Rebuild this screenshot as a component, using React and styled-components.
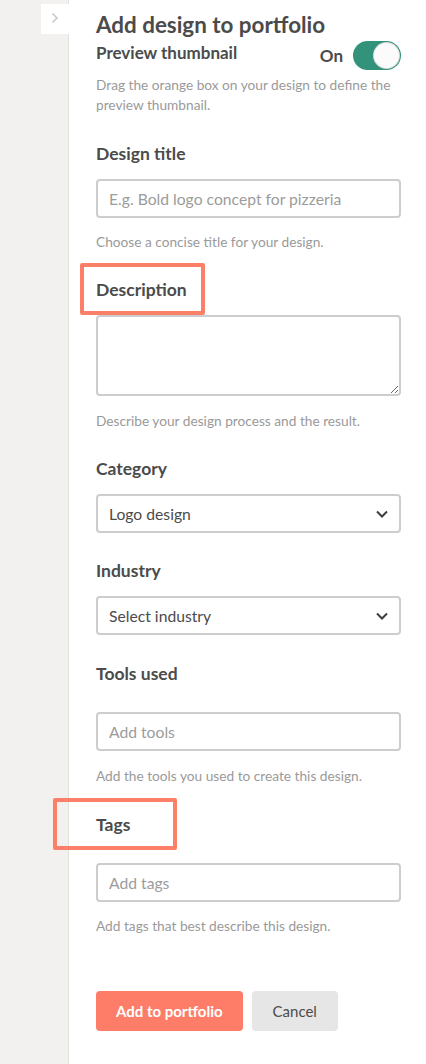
import React, { useState } from 'react';
import styled, { createGlobalStyle } from 'styled-components';

const GlobalStyle = createGlobalStyle`
  html, body {
    margin: 0;
    padding: 0;
    background: #ffffff;
  }
  body {
    font-family: Lato, 'Liberation Sans', Arial, sans-serif;
    color: #4b4b4b;
  }
`;

const Page = styled.div`
  display: flex;
  min-height: 1064px;
`;

const Rail = styled.aside`
  width: 69px;
  flex-shrink: 0;
  background: #f2f1ef;
  border-right: 1px solid #e3e2df;
  padding-top: 4px;
  box-sizing: border-box;
`;

const RailTab = styled.button`
  display: flex;
  align-items: center;
  justify-content: center;
  margin-left: 41px;
  width: 28px;
  height: 30px;
  padding: 0 0 2px 0;
  border: none;
  background: #ffffff;
  cursor: pointer;
`;

const Panel = styled.main`
  flex: 1;
  padding: 12px 25px 40px 27px;
  box-sizing: border-box;
`;

const Title = styled.h1`
  margin: 0;
  font-size: 22.4px;
  line-height: 26px;
  font-weight: 700;
  color: #4b4b4b;
`;

const ToggleRow = styled.div`
  display: flex;
  align-items: center;
  justify-content: space-between;
  margin-top: 3px;
`;

const SubHeading = styled.span`
  font-size: 17px;
  font-weight: 700;
  line-height: 22px;
  margin-top: -6px;
`;

const ToggleWrap = styled.label`
  display: flex;
  align-items: center;
  gap: 10px;
  font-size: 17px;
  font-weight: 700;
  cursor: pointer;
`;

const Track = styled.span`
  position: relative;
  display: inline-block;
  width: 48px;
  height: 29px;
  border-radius: 15px;
  background: ${(p) => (p.$on ? '#33937a' : '#cfcfcf')};
  transition: background 0.2s;
`;

const Knob = styled.span`
  position: absolute;
  top: 2px;
  left: ${(p) => (p.$on ? '21px' : '2px')};
  width: 25px;
  height: 25px;
  border-radius: 50%;
  background: #fbfbfb;
  box-shadow: 0 0 0 1px #d8d8d8;
  transition: left 0.2s;
`;

const Hint = styled.p`
  margin: ${(p) => p.$top ?? 14}px 0 0;
  font-size: 13.7px;
  line-height: 20px;
  color: #9a9a9a;
`;

const Field = styled.section`
  margin-top: ${(p) => p.$top}px;
`;

const Label = styled.label`
  position: relative;
  display: inline-block;
  font-size: 17.5px;
  font-weight: 700;
  line-height: 22px;
  color: #4b4b4b;
`;

// annotation frame drawn around a label
const Callout = styled.span`
  position: absolute;
  top: -16px;
  left: ${(p) => p.$left}px;
  width: ${(p) => p.$width}px;
  height: 52px;
  box-sizing: border-box;
  border: 4px solid #fc7f68;
  border-radius: 2px;
  pointer-events: none;
`;

const controlBase = `
  display: block;
  width: 100%;
  box-sizing: border-box;
  border: 2px solid #cdcdcd;
  border-radius: 4px;
  background: #ffffff;
  font-family: Lato, 'Liberation Sans', Arial, sans-serif;
  font-size: 15.7px;
  color: #4b4b4b;
  outline: none;
`;

const TextInput = styled.input`
  ${controlBase}
  margin-top: ${(p) => p.$top ?? 14}px;
  height: 39px;
  padding: 0 11px;
  &::placeholder {
    color: #9c9c9c;
  }
`;

const TextArea = styled.textarea`
  ${controlBase}
  margin-top: 14px;
  height: 81px;
  padding: 8px 11px;
`;

const SelectBox = styled.div`
  position: relative;
  margin-top: 14px;
`;

const Select = styled.select`
  ${controlBase}
  appearance: none;
  height: 39px;
  padding: 0 36px 0 11px;
`;

const Chevron = styled.svg`
  position: absolute;
  right: 12px;
  top: 15px;
  pointer-events: none;
`;

const Actions = styled.div`
  display: flex;
  gap: 9px;
  margin-top: 55px;
`;

const Button = styled.button`
  height: 40px;
  padding: 0 ${(p) => (p.$primary ? 20 : 21)}px;
  border: none;
  border-radius: 4px;
  font-family: Lato, 'Liberation Sans', Arial, sans-serif;
  font-size: 15px;
  cursor: pointer;
  background: ${(p) => (p.$primary ? '#fd7d69' : '#e6e6e6')};
  color: ${(p) => (p.$primary ? '#ffffff' : '#4b4b4b')};
  font-weight: ${(p) => (p.$primary ? 700 : 400)};
`;

function ChevronDown() {
  return (
    <Chevron width="14" height="10" viewBox="0 0 14 10">
      <path d="M2 2.5 L7 7.5 L12 2.5" fill="none" stroke="#3e3e3e" strokeWidth="2" />
    </Chevron>
  );
}

export default function App() {
  const [preview, setPreview] = useState(true);

  return (
    <>
      <GlobalStyle />
      <Page>
        <Rail>
          <RailTab aria-label="Expand">
            <svg width="8" height="12" viewBox="0 0 8 12">
              <path d="M1.5 1.5 L6 6 L1.5 10.5" fill="none" stroke="#c9c9c9" strokeWidth="1.6" />
            </svg>
          </RailTab>
        </Rail>

        <Panel>
          <Title>Add design to portfolio</Title>

          <ToggleRow>
            <SubHeading>Preview thumbnail</SubHeading>
            <ToggleWrap onClick={() => setPreview(!preview)}>
              {preview ? 'On' : 'Off'}
              <Track $on={preview}>
                <Knob $on={preview} />
              </Track>
            </ToggleWrap>
          </ToggleRow>
          <Hint $top={5}>
            Drag the orange box on your design to define the preview thumbnail.
          </Hint>

          <Field $top={28}>
            <Label>Design title</Label>
            <TextInput placeholder="E.g. Bold logo concept for pizzeria" />
            <Hint>Choose a concise title for your design.</Hint>
          </Field>

          <Field $top={27}>
            <Label>
              Description
              <Callout $left={-16} $width={125} />
            </Label>
            <TextArea />
            <Hint $top={15}>Describe your design process and the result.</Hint>
          </Field>

          <Field $top={27}>
            <Label>Category</Label>
            <SelectBox>
              <Select defaultValue="logo">
                <option value="logo">Logo design</option>
                <option value="web">Web design</option>
              </Select>
              <ChevronDown />
            </SelectBox>
          </Field>

          <Field $top={27}>
            <Label>Industry</Label>
            <SelectBox>
              <Select defaultValue="">
                <option value="">Select industry</option>
                <option value="food">Food &amp; drink</option>
              </Select>
              <ChevronDown />
            </SelectBox>
          </Field>

          <Field $top={28}>
            <Label>Tools used</Label>
            <TextInput $top={27} placeholder="Add tools" />
            <Hint $top={15}>Add the tools you used to create this design.</Hint>
          </Field>

          <Field $top={28}>
            <Label>
              Tags
              <Callout $left={-43} $width={124} />
            </Label>
            <TextInput $top={27} placeholder="Add tags" />
            <Hint $top={14}>Add tags that best describe this design.</Hint>
          </Field>

          <Actions>
            <Button $primary>Add to portfolio</Button>
            <Button>Cancel</Button>
          </Actions>
        </Panel>
      </Page>
    </>
  );
}
